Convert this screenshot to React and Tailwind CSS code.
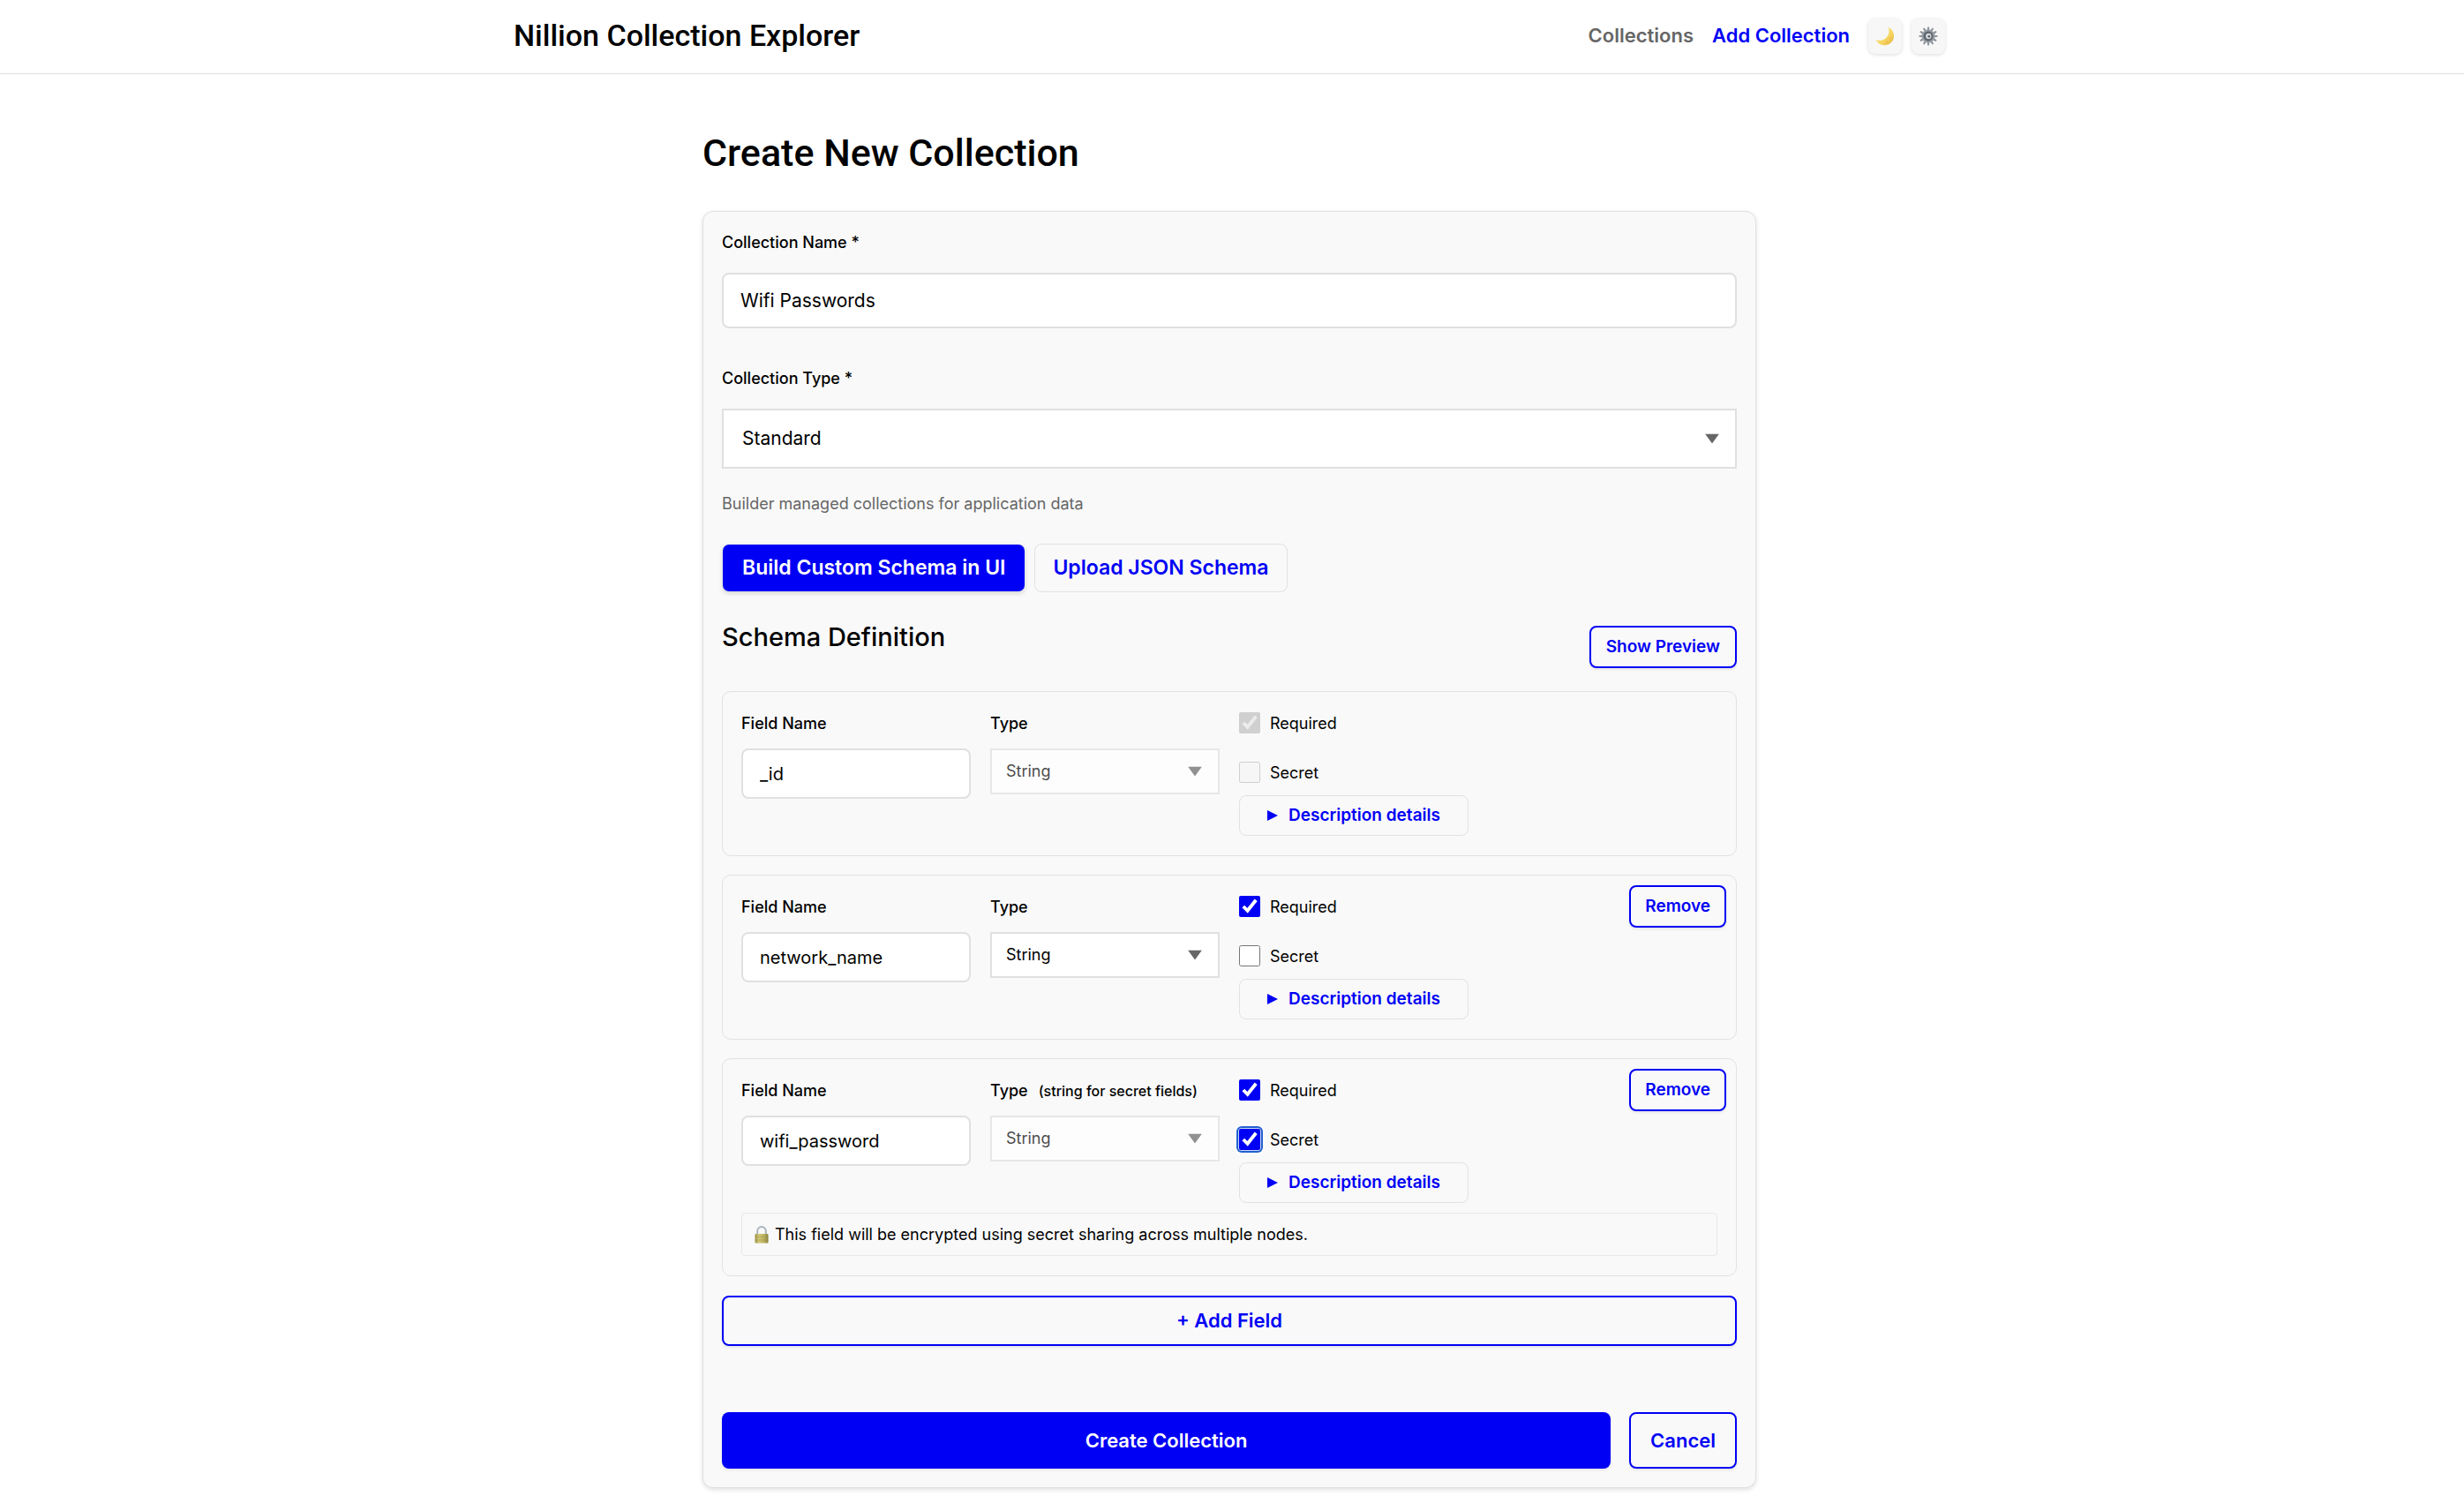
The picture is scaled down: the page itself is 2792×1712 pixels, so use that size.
import React, { useState } from "react";

const outlineButton =
  "flex items-center justify-center rounded-lg border-2 border-[#0000f5] font-semibold text-[#0000f5] shadow-[0_2px_3px_rgba(0,0,0,0.08)]";

function MoonIcon() {
  return (
    <svg viewBox="0 0 22 22" className="size-[22px]" aria-hidden="true">
      <defs>
        <linearGradient id="moon" x1="0" y1="0" x2="1" y2="1">
          <stop offset="0" stopColor="#fbe9a0" />
          <stop offset="0.6" stopColor="#f6d560" />
          <stop offset="1" stopColor="#e3b23f" />
        </linearGradient>
      </defs>
      <path
        d="M14.600 0.800c4.400 2 6.900 6.200 6.400 11-.6 5.700-5.300 9.600-11 9.400-4.200-.1-7.700-2.500-9.400-6.200 3.400 1.200 7.500 1 10.700-1.300 3.900-2.800 5.100-8.200 3.300-12.900z"
        fill="url(#moon)"
      />
      <circle cx="17.500" cy="13.500" r="0.800" fill="#e2b548" />
      <circle cx="13" cy="17.800" r="0.800" fill="#e2b548" />
    </svg>
  );
}

function GearIcon() {
  const teeth = Array.from({ length: 12 }, (_, i) => i * 30);
  return (
    <svg viewBox="0 0 22 22" className="size-[22px]" aria-hidden="true">
      <g fill="#8b929a">
        {teeth.map((angle) => (
          <path key={angle} d="M10.200 0.400h1.600l0.500 3.600h-2.600z" transform={`rotate(${angle} 11 11)`} />
        ))}
      </g>
      <circle cx="11" cy="11" r="6.800" fill="#8d959d" stroke="#979ea6" strokeWidth="1.400" />
      <circle cx="11" cy="11" r="5.400" fill="#5c636b" />
      <circle cx="11.300" cy="11" r="3.200" fill="#d3d9df" />
      <circle cx="11.800" cy="11.200" r="1.300" fill="#4d545c" />
    </svg>
  );
}

function LockIcon() {
  return (
    <svg viewBox="0 0 16 20" className="h-5 w-4" aria-hidden="true">
      <defs>
        <linearGradient id="lock" x1="0" y1="0" x2="1" y2="0">
          <stop offset="0" stopColor="#9c9448" />
          <stop offset="0.300" stopColor="#d2c778" />
          <stop offset="0.700" stopColor="#b9ae5c" />
          <stop offset="1" stopColor="#8b8340" />
        </linearGradient>
      </defs>
      <path d="M3.200 11V5.800a4.800 4.800 0 0 1 9.600 0V11" fill="none" stroke="#a9b3bd" strokeWidth="2" />
      <rect x="0.500" y="9" width="15" height="10.500" rx="1" fill="url(#lock)" />
      <path d="M0.500 12.500h15M0.500 16h15" stroke="#8f8744" strokeWidth="0.600" opacity="0.600" />
    </svg>
  );
}

function SelectBox({ id, options, disabled, boxClass }) {
  return (
    <div className={disabled ? "relative opacity-70" : "relative"}>
      <select
        id={id}
        disabled={disabled}
        className={`w-full appearance-none border-2 border-[#e0e0e0] bg-white text-black opacity-100 ${boxClass}`}
      >
        {options.map((option) => (
          <option key={option}>{option}</option>
        ))}
      </select>
      <svg
        viewBox="0 0 16 11"
        className="pointer-events-none absolute top-1/2 right-5 h-[11px] w-4 -translate-y-1/2"
        aria-hidden="true"
      >
        <path d="M0 0h16l-8 11z" fill="#666" />
      </svg>
    </div>
  );
}

function Check({ id, label, checked, disabled, focused }) {
  const [on, setOn] = useState(checked);
  return (
    <label htmlFor={id} className="flex h-[26px] items-center gap-[11px] text-lg">
      <span
        className={
          focused
            ? "flex size-6 rounded-[3px] shadow-[0_0_0_1px_#c6d6f6,0_0_0_3px_#2360cd,0_0_0_5px_#ffffff]"
            : "flex size-6"
        }
      >
        <input
          id={id}
          type="checkbox"
          checked={on}
          disabled={disabled}
          onChange={() => setOn(!on)}
          className="size-6 accent-[#0000f5]"
        />
      </span>
      <span className="pt-0.5">{label}</span>
    </label>
  );
}

function FieldCard({ field }) {
  const { key, name, hint, lockedType, required, secret, locked, focusSecret, note } = field;
  return (
    <section className="rounded-[10px] border border-[#e2e2e2] px-[21px] py-[22px]">
      <div className="grid grid-cols-4 items-start gap-x-[22px]">
        <div className="flex flex-col gap-[14px]">
          <label htmlFor={`${key}-name`} className="text-lg/[28px] font-medium">
            Field Name
          </label>
          <input
            id={`${key}-name`}
            type="text"
            defaultValue={name}
            className="h-[57px] w-full rounded-lg border-2 border-[#e0e0e0] bg-white px-[19px] text-xl"
          />
        </div>
        <div className="flex flex-col gap-[14px]">
          <label htmlFor={`${key}-type`} className="flex items-baseline gap-3 text-lg/[28px] font-medium whitespace-nowrap">
            Type
            {hint && <span className="text-base/[28px]">{hint}</span>}
          </label>
          <SelectBox
            id={`${key}-type`}
            options={["String", "Number", "Boolean"]}
            disabled={lockedType}
            boxClass="h-[52px] px-4 text-lg"
          />
        </div>
        <div className="flex flex-col">
          <Check id={`${key}-required`} label="Required" checked={required} disabled={locked} />
          <div className="mt-[30px]">
            <Check id={`${key}-secret`} label="Secret" checked={secret} disabled={locked} focused={focusSecret} />
          </div>
          <button
            type="button"
            className="mt-[13px] flex h-[46px] items-center justify-center gap-3 rounded-lg border border-[#e2e2e2] text-[19px] font-semibold text-[#0000f5]"
          >
            <svg viewBox="0 0 12 12" className="size-3" aria-hidden="true">
              <path d="M0 0l12 6-12 6z" fill="currentColor" />
            </svg>
            Description details
          </button>
        </div>
        {!locked && (
          <button
            type="button"
            className={`-mt-[11px] -mr-[10px] h-12 justify-self-end px-4 text-[19px] ${outlineButton}`}
          >
            Remove
          </button>
        )}
      </div>
      {note && (
        <p className="mt-[11px] flex h-[49px] items-center gap-[7px] rounded border border-[#e8e8e8] px-3.5 text-lg">
          <LockIcon />
          {note}
        </p>
      )}
    </section>
  );
}

const fields = [
  { key: "id", name: "_id", lockedType: true, required: true, secret: false, locked: true },
  { key: "network", name: "network_name", required: true, secret: false },
  {
    key: "password",
    name: "wifi_password",
    hint: "(string for secret fields)",
    lockedType: true,
    required: true,
    secret: true,
    focusSecret: true,
    note: "This field will be encrypted using secret sharing across multiple nodes.",
  },
];

export default function App() {
  const iconButton =
    "flex h-10 w-[38px] items-center justify-center rounded-lg bg-[#f7f7f7] shadow-[0_1px_4px_rgba(0,0,0,0.14)]";
  return (
    <div className="min-h-screen bg-white font-['Inter',sans-serif] text-black">
      <header className="border-b border-[#e0e0e0] pr-1.5">
        <div className="mx-auto flex h-[83px] max-w-[1622px] items-center justify-between pb-0.5">
          <p className="font-['Roboto',sans-serif] text-[34px] font-medium">Nillion Collection Explorer</p>
          <nav className="flex items-center gap-[21px] text-[22px] font-semibold">
            <a href="#collections" className="text-[#666]">Collections</a>
            <a href="#add" className="text-[#0000f5]">Add Collection</a>
            <div className="flex gap-[11px]">
              <button type="button" aria-label="Toggle dark mode" className={iconButton}>
                <MoonIcon />
              </button>
              <button type="button" aria-label="Settings" className={iconButton}>
                <GearIcon />
              </button>
            </div>
          </nav>
        </div>
      </header>

      <main className="pt-[65px] pr-1.5 pb-6">
        <div className="mx-auto max-w-[1194px]">
          <h1 className="font-['Roboto',sans-serif] text-[43px]/[48px] font-medium">Create New Collection</h1>

          <form
            onSubmit={(event) => event.preventDefault()}
            className="mt-[42px] rounded-xl border border-[#e0e0e0] bg-[#f9f9f9] p-[21px] shadow-[0_2px_5px_rgba(0,0,0,0.12)]"
          >
            <div className="flex flex-col gap-5">
              <label htmlFor="collection-name" className="text-lg/[28px] font-medium">
                Collection Name *
              </label>
              <input
                id="collection-name"
                type="text"
                defaultValue="Wifi Passwords"
                className="h-[63px] w-full rounded-lg border-2 border-[#e0e0e0] bg-white px-[19px] text-[21px]"
              />
            </div>

            <div className="mt-[43px] flex flex-col gap-5">
              <label htmlFor="collection-type" className="text-lg/[28px] font-medium">
                Collection Type *
              </label>
              <SelectBox
                id="collection-type"
                options={["Standard", "Owned"]}
                boxClass="h-[68px] px-[21px] text-[21px]"
              />
            </div>
            <p className="mt-[26px] text-lg/[28px] text-[#666]">
              Builder managed collections for application data
            </p>

            <div className="mt-[31px] flex gap-[10px] text-[23px] font-semibold">
              <button
                type="button"
                className="h-[55px] rounded-lg border border-transparent bg-[#0000f5] bg-clip-padding px-[22px] text-white shadow-[0_2px_4px_rgba(0,0,0,0.12)]"
              >
                Build Custom Schema in UI
              </button>
              <button type="button" className="h-[55px] rounded-lg border border-[#e2e2e2] px-5 text-[#0000f5]">
                Upload JSON Schema
              </button>
            </div>

            <div className="mt-8 flex items-start justify-between">
              <h2 className="text-[29px]/[38px] font-medium">Schema Definition</h2>
              <button type="button" className={`mt-1.5 h-12 px-[17px] text-[19px] ${outlineButton}`}>
                Show Preview
              </button>
            </div>

            <div className="mt-[26px] flex flex-col gap-[21px]">
              {fields.map((field) => (
                <FieldCard key={field.key} field={field} />
              ))}
            </div>

            <button type="button" className={`mt-[22px] h-[57px] w-full text-[22px] ${outlineButton}`}>
              + Add Field
            </button>

            <div className="mt-[75px] flex gap-[21px] text-[22px]">
              <button
                type="submit"
                className="h-16 flex-1 rounded-lg bg-[#0000f5] font-semibold text-white shadow-[0_2px_3px_rgba(0,0,0,0.08)]"
              >
                Create Collection
              </button>
              <button type="button" className={`h-16 px-[22px] ${outlineButton}`}>
                Cancel
              </button>
            </div>
          </form>
        </div>
      </main>
    </div>
  );
}
